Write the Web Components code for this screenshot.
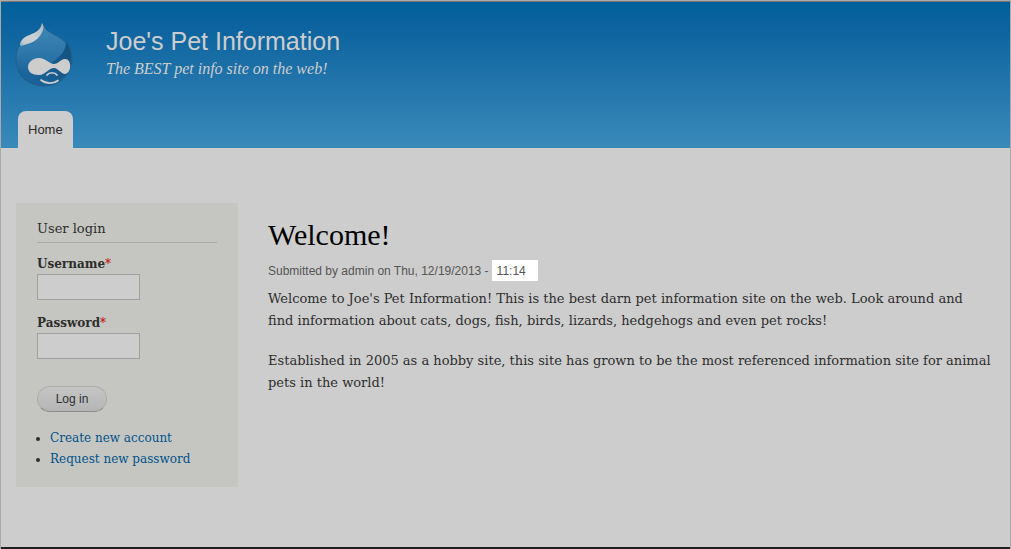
<!DOCTYPE html>
<html lang="en">
<head>
<meta charset="utf-8">
<meta name="viewport" content="width=device-width, initial-scale=1">
<title>Joe's Pet Information</title>
<style>
body { margin: 0; background: #cdcdcd; color: #2e2e2e; --sans: "Liberation Sans", Arial, sans-serif; --serif: "DejaVu Serif", Georgia, serif; --display: "Liberation Serif", Georgia, serif; font: 13px/22px var(--serif); }
</style>
</head>
<body>
<pet-page>
  <site-header slot="header" name="Joe's Pet Information" slogan="The BEST pet info site on the web!"><nav-tab href="#home">Home</nav-tab></site-header>
  <login-block slot="sidebar"></login-block>
  <article-node heading="Welcome!" byline="Submitted by admin on Thu, 12/19/2013 -" time="11:14">
    <p>Welcome to Joe's Pet Information! This is the best darn pet information site on the web. Look around and find information about cats, dogs, fish, birds, lizards, hedgehogs and even pet rocks!</p>
    <p>Established in 2005 as a hobby site, this site has grown to be the most referenced information site for animal pets in the world!</p>
  </article-node>
</pet-page>

<template id="t-page">
<style>
:host { display: flex; flex-direction: column; box-sizing: border-box; min-height: 100vh; border: 1px solid #aaa; border-bottom: 0; }
main { flex: 1; display: flex; align-items: flex-start; gap: 30px; padding: 55px 18px 58px 15px; }
aside { flex: 0 0 222px; }
section { flex: 1; min-width: 0; padding-top: 12px; }
footer { height: 2px; background: #231f20; }
</style>
<slot name="header"></slot>
<main><aside><slot name="sidebar"></slot></aside><section><slot></slot></section></main>
<footer></footer>
</template>

<template id="t-header">
<style>
:host { display: block; border-top: 1px solid #777; background: linear-gradient(#00619a, #0b629e 15%, #3a8aba); color: #cdcdcd; }
.brand { display: flex; gap: 33px; padding: 20px 14px 0; }
h1 { margin: 4px 0 0; font: 25px/30px var(--sans); }
p { margin: 2px 0 0; font: italic 16px/22px var(--display); }
nav { display: flex; gap: 5px; padding: 23px 17px 0; }
</style>
<header>
<div class="brand">
<pet-logo></pet-logo>
<div><h1></h1><p></p></div>
</div>
<nav><slot></slot></nav>
</header>
</template>

<template id="t-logo">
<style>
:host { display: block; }
svg { display: block; width: 58px; height: 66px; }
</style>
<svg viewBox="0 0 58 66" role="img" aria-label="Home">
<defs>
<linearGradient id="body" x1="0" y1="0" x2="0" y2="1"><stop offset="0" stop-color="#3f86b3"/><stop offset=".45" stop-color="#2f79ab"/><stop offset=".8" stop-color="#1a649b"/><stop offset="1" stop-color="#1d6093"/></linearGradient>
<linearGradient id="shine" x1="1" y1="0" x2="0" y2="1"><stop offset="0" stop-color="#9dbac9"/><stop offset=".5" stop-color="#cdd0d2"/><stop offset=".85" stop-color="#c4cbd0"/><stop offset="1" stop-color="#7da6c0"/></linearGradient>
<linearGradient id="shade" x1="1" y1="0" x2="0" y2="1"><stop offset="0" stop-color="#15517d"/><stop offset=".5" stop-color="#165a8c"/><stop offset="1" stop-color="#1a649b"/></linearGradient>
</defs>
<path d="M27 0C29 7 34 10 40 13C50 18 57 25 57 36C57 53 45 64 29 64C13 64 1 53 1 36C1 25 7 18 18 12C23 9 26 5 27 0Z" fill="url(#body)"/>
<path d="M51 19C51 28 47 33 39 39C32 46 30 55 14 60C33 69 57 57 56.500 36C56.500 28 54 23 51 19Z" fill="url(#shade)"/>
<path d="M2 46C3 52 12 55 20 55C18 58 14 60 13 60C7 57 3 51 2 46Z" fill="#1a649b"/>
<path d="M27 0C29 7 34 10 40 13C50 18 57 25 57 36C57 53 45 64 29 64C13 64 1 53 1 36C1 25 7 18 18 12C23 9 26 5 27 0Z" fill="none" stroke="#225c86" stroke-width="1" opacity=".8"/>
<path d="M27 1C30 5 28 10 24 15C19 21 12 22 6 24C3 23 7 16 12 14C19 11 26 9 27 1Z" fill="url(#shine)"/>
<path d="M24 36C31 36 34 42 39 42C43 42 46 37 50 37C57 37 57 51 50 52C46 52 43 46 39 46C34 46 30 53 24 53C17 53 13 50 13 45C13 40 18 36 24 36Z" fill="#cdcdcd"/>
<path d="M32 53C34 50 40 50 42 53M26 58C31 62 39 62 43 58.500" fill="none" stroke="#cdcdcd" stroke-width="1.700" stroke-linecap="round"/>
</svg>
</template>

<template id="t-tab">
<style>
:host { display: block; }
a { display: block; padding: 8px 10px 7px; border-radius: 8px 8px 0 0; background: #cdcdcd; color: #2a2a2a; font: 13px/22px var(--sans); text-decoration: none; }
</style>
<a><slot></slot></a>
</template>

<template id="t-login">
<style>
:host { display: block; box-sizing: border-box; padding: 15px 21px 17px; background: #c5c6c1; }
h2 { margin: 0 0 11px; padding-bottom: 2px; border-bottom: 1px solid #aaa; font: 13px/22px var(--serif); }
form { margin: 0; }
button { display: block; box-sizing: border-box; width: 70px; height: 26px; margin: 27px 0 16px; padding: 0; border: 1px solid #adadad; border-bottom-color: #8d8d8d; border-radius: 13px; background: linear-gradient(#c5c5c5, #b5b5b5); color: #2e2e2e; font: 12px/24px var(--sans); }
ul { margin: 0; padding: 0 0 0 13px; font: 12px/21px var(--serif); }
a { color: #00528c; text-decoration: none; }
</style>
<h2>User login</h2>
<form>
<form-field label="Username" type="text"></form-field>
<form-field label="Password" type="password"></form-field>
<button type="button">Log in</button>
</form>
<ul><li><a href="#register">Create new account</a></li><li><a href="#password">Request new password</a></li></ul>
</template>

<template id="t-field">
<style>
:host { display: block; }
:host(:not(:first-of-type)) { margin-top: 13px; }
label { display: block; font: bold 12px/20px var(--serif); }
span { color: #c00000; font-weight: normal; }
input { display: block; box-sizing: border-box; width: 103px; height: 26px; margin: 0; padding: 2px; border: 1px solid #a0a0a0; background: #cdcdcd; font: 13px var(--serif); }
</style>
<label for="field"></label><input id="field">
</template>

<template id="t-article">
<style>
:host { display: block; }
h1 { margin: 0; color: #000; font: 30px/40px var(--display); }
.meta { display: flex; gap: 3px; margin: 5px 0 7px; color: #555; font: 12px/19px var(--sans); }
span { padding-top: 2px; }
time { padding: 2px 12px 0 5px; background: #fff; }
::slotted(p) { margin: 0 0 18px; }
</style>
<article><h1></h1><div class="meta"><span></span><time></time></div><slot></slot></article>
</template>

<script>
class Base extends HTMLElement {
  constructor(id) {
    super();
    this.attachShadow({ mode: "open" }).append(document.getElementById(id).content.cloneNode(true));
  }
  part$(selector) { return this.shadowRoot.querySelector(selector); }
}
customElements.define("pet-logo", class extends Base { constructor() { super("t-logo"); } });
customElements.define("pet-page", class extends Base { constructor() { super("t-page"); } });
customElements.define("site-header", class extends Base {
  constructor() { super("t-header"); }
  connectedCallback() {
    this.part$("h1").textContent = this.getAttribute("name");
    this.part$("p").textContent = this.getAttribute("slogan");
  }
});
customElements.define("nav-tab", class extends Base {
  constructor() { super("t-tab"); }
  connectedCallback() { this.part$("a").href = this.getAttribute("href"); }
});
customElements.define("form-field", class extends Base {
  constructor() { super("t-field"); }
  connectedCallback() {
    const star = document.createElement("span");
    star.textContent = "*";
    this.part$("label").replaceChildren(this.getAttribute("label"), star);
    this.part$("input").type = this.getAttribute("type");
  }
});
customElements.define("login-block", class extends Base { constructor() { super("t-login"); } });
customElements.define("article-node", class extends Base {
  constructor() { super("t-article"); }
  connectedCallback() {
    this.part$("h1").textContent = this.getAttribute("heading");
    this.part$(".meta span").textContent = this.getAttribute("byline");
    this.part$("time").textContent = this.getAttribute("time");
  }
});
</script>
</body>
</html>
